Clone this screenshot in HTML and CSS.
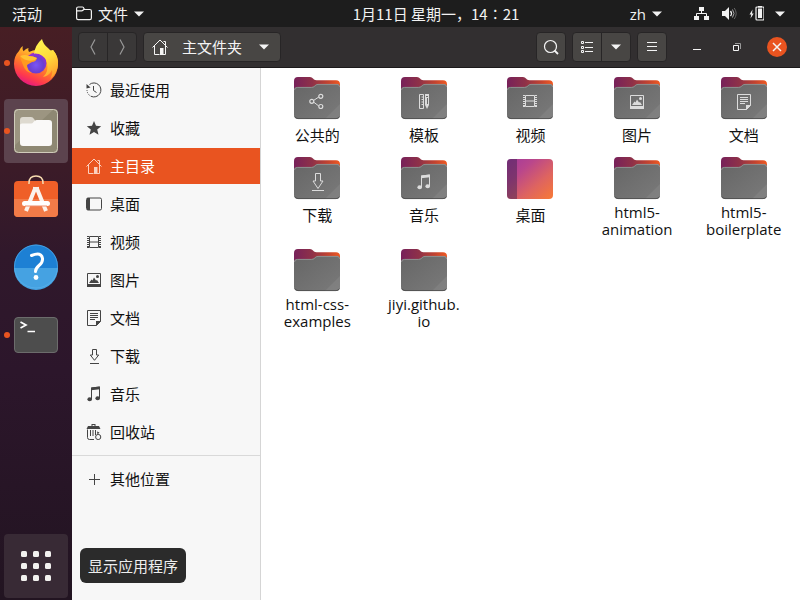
FILE: index.html
```html
<!DOCTYPE html>
<html lang="zh-CN">
<head>
<meta charset="utf-8">
<meta name="viewport" content="width=device-width, initial-scale=1">
<title>主文件夹</title>
<link rel="stylesheet" href="styles.css">
</head>
<body>
<svg class="defs" width="0" height="0" aria-hidden="true">
  <defs>
    <linearGradient id="folder-back" x1="0" y1="0" x2="1" y2="0"><stop offset="0" stop-color="#77215a"/><stop offset=".4" stop-color="#8f3148"/><stop offset=".75" stop-color="#c4442f"/><stop offset="1" stop-color="#f05a22"/></linearGradient>
    <linearGradient id="folder-front" x1="0" y1="0" x2="1" y2="1"><stop offset="0" stop-color="#666"/><stop offset="1" stop-color="#7a7a7a"/></linearGradient>
    <linearGradient id="desk" x1="0" y1="0" x2="1" y2="1"><stop offset="0" stop-color="#a33a9c"/><stop offset=".3" stop-color="#b9468c"/><stop offset=".65" stop-color="#de6460"/><stop offset="1" stop-color="#f87a35"/></linearGradient>
    <linearGradient id="ff-body" x1=".8" y1="0" x2=".3" y2="1"><stop offset="0" stop-color="#fff14a"/><stop offset=".3" stop-color="#ffb52c"/><stop offset=".55" stop-color="#ff7a2a"/><stop offset=".8" stop-color="#ff3b4b"/><stop offset="1" stop-color="#e01587"/></linearGradient>
    <linearGradient id="ff-flame" x1=".3" y1="0" x2=".7" y2="1"><stop offset="0" stop-color="#fff44f"/><stop offset=".5" stop-color="#ffdb3b"/><stop offset="1" stop-color="#ff9c2c"/></linearGradient>
    <radialGradient id="ff-globe" cx=".5" cy=".6" r=".6"><stop offset="0" stop-color="#7a55f5"/><stop offset=".6" stop-color="#6a3fd0"/><stop offset="1" stop-color="#a42cd0"/></radialGradient>
    <symbol id="folder" viewBox="0 0 46 43">
      <path fill="url(#folder-back)" d="M0 20V4q0-4 4-4h12q2 0 3 1.500l1 1q1 .8 2.500.8H42q4 0 4 4V20z"/>
      <path fill="url(#folder-front)" d="M0 13q0-3 3-3h14q2 0 3-1l1.500-1.300Q22.500 7 24 7h19q3 0 3 3v28q0 4-4 4H4q-4 0-4-4z"/>
      <path fill="none" stroke="#999" stroke-width=".8" d="M.5 13q0-2.600 3-2.600h14q2 0 3-1l1-1Q22.500 7.400 24 7.400h19q2.500 0 2.600 2.600"/>
      <path fill="#858585" d="M46 27v11q0 4-4 4H31z" opacity=".6"/>
      <path fill="none" stroke="#494949" stroke-width=".8" d="M.8 39.500Q2 41.600 4 41.600h38q2.500 0 3.400-2"/>
    </symbol>
    <symbol id="home" viewBox="0 0 16 16"><path fill="none" stroke="currentColor" d="M.5 8.500 8 1l7.500 7.500M2.500 7v8.500h5M13.500 7v8.500h-2.500M11.500 2.500h2v3.500"/><path fill="currentColor" d="M8 9h3.500v7H8z"/></symbol>
    <symbol id="recent" viewBox="0 0 16 16"><path fill="none" stroke="currentColor" d="M3.500 2.500A7 7 0 1 1 5 14.300M7.500 4v4.500l3 2"/><path fill="currentColor" d="M.5 2v4.500l4-1z"/><path fill="none" stroke="currentColor" stroke-dasharray="1 1" d="M1 8a7 7 0 0 0 4 6.300"/></symbol>
    <symbol id="star" viewBox="0 0 16 16"><path fill="currentColor" d="m8 1 2 4.800 5.200.4-4 3.400 1.300 5.200L8 12l-4.500 2.800 1.300-5.200-4-3.400L6 5.800z"/></symbol>
    <symbol id="desktop" viewBox="0 0 16 16"><rect x=".5" y="2" width="15" height="12" rx="1.500" fill="none" stroke="currentColor"/><path fill="currentColor" d="M1 2h3v12H1z"/></symbol>
    <symbol id="video" viewBox="0 0 16 16"><path fill="none" stroke="currentColor" d="M3.500 2.500h9v11h-9zM3.500 8h9M3 2.500H1M13 2.500h2M3 13.500H1M13 13.500h2"/><path fill="none" stroke="currentColor" stroke-width="2" stroke-dasharray="1 1" d="M2 2v12M14 2v12"/></symbol>
    <symbol id="picture" viewBox="0 0 16 16"><path fill="none" stroke="currentColor" d="M1.500 1.500h13v13h-13z"/><path fill="currentColor" d="M1 12h14v3H1zM3 11l2.500-3.500 1 1L8 5.500 10 8.500l1-.5 2 3z"/><circle cx="11.500" cy="4.500" r="1.500" fill="currentColor"/></symbol>
    <symbol id="document" viewBox="0 0 16 16"><path fill="none" stroke="currentColor" d="M1.500.5h13v11l-4 4h-9zM4 3.500h8M4 5.500h8M4 7.500h8M4 9.500h5"/><path fill="currentColor" d="M10 11h5l-5 5z"/></symbol>
    <symbol id="download" viewBox="0 0 16 16"><path fill="none" stroke="currentColor" d="M6.500 1.500h4V7h2.200l-4.200 5.300L4.300 7h2.200zM4 15.500h9"/></symbol>
    <symbol id="music" viewBox="0 0 16 16"><path fill="none" stroke="currentColor" d="M5.500 13V2l8-1v11"/><path fill="currentColor" d="M5 1.500 14 .5v2.800l-9 1z"/><ellipse cx="3.700" cy="13.200" rx="2.300" ry="2" fill="currentColor"/><ellipse cx="11.700" cy="12.200" rx="2.300" ry="2" fill="currentColor"/></symbol>
    <symbol id="trash" viewBox="0 0 16 16"><path fill="currentColor" d="M5.500 0h4v2H13l1.500 3H.5L2 2h3.500zM6.500 1v1h2V1z"/><path fill="none" stroke="currentColor" d="M1.500 5.500v8q0 2 2 2H8M4.500 6v6M7 6v6M9.500 6v5"/><circle cx="12.200" cy="13" r="2.600" fill="none" stroke="currentColor"/><path fill="currentColor" d="m11 7.500 2.500 1-2 2z"/></symbol>
    <symbol id="plus" viewBox="0 0 16 16"><path fill="none" stroke="currentColor" d="M8.500 3v11M3 8.500h11"/></symbol>
    <symbol id="share" viewBox="0 0 16 16"><path fill="none" stroke="currentColor" d="M4.500 7.500 9.800 4M4.500 9l5.300 4"/><g fill="none" stroke="currentColor" stroke-width="1.200"><circle cx="2.800" cy="8.300" r="2"/><circle cx="11.800" cy="3.300" r="2"/><circle cx="11.800" cy="13.500" r="2"/></g></symbol>
    <symbol id="template" viewBox="0 0 16 16"><path fill="none" stroke="currentColor" d="M3.500 1.500h4v14h-4zM5.500 4h2M5.500 6.500h2M5.500 9h2M5.500 11.500h2"/><path fill="currentColor" d="M9 1h4v11l-2 4-2-4z"/><path stroke="#6c6c6c" d="M10 3.500h2M11.500 5v6"/></symbol>
    <symbol id="caret" viewBox="0 0 10 6"><path fill="currentColor" d="M0 .5h10l-5 5z"/></symbol>
  </defs>
</svg>

<div class="desktop">
  <header class="topbar">
    <button class="bar-btn activities">活动</button>
    <button class="bar-btn app-menu">
      <svg class="i16" viewBox="0 0 16 16"><path fill="none" stroke="currentColor" stroke-width="1.200" d="M.6 12V2.600Q.6 1 2.200 1h4.300q1 0 1.300 1.300.3 1.200 1.500 1.200h4.500q1.600 0 1.600 1.600V12q0 1.600-1.600 1.600H2.200Q.6 13.600.6 12zM.6 4.800h5q1.500 0 2.200-1.500"/></svg>
      <span>文件</span>
      <svg class="caret"><use href="#caret"/></svg>
    </button>
    <button class="bar-btn clock">1月11日 星期一，14∶21</button>
    <div class="status">
      <button class="bar-btn lang"><span>zh</span><svg class="caret"><use href="#caret"/></svg></button>
      <button class="bar-btn system" aria-label="系统菜单">
        <svg class="i16" viewBox="0 0 16 16"><path fill="currentColor" d="M5 1h5v4H5zM0 10h5v4H0zM10 10h5v4h-5z"/><path fill="none" stroke="currentColor" d="M7.500 5v2.500M2.500 10V7.500h10V10"/></svg>
        <svg class="i16" viewBox="0 0 16 16"><path fill="currentColor" d="M1 5h3l4-4v13l-4-4H1z"/><path fill="none" stroke="currentColor" stroke-width="1.300" d="M9.500 5q2 2.500 0 5"/><path fill="none" stroke="#aaa" d="M11.500 3.500q3 4 0 8"/><path fill="none" stroke="#666" d="M13.200 2q4 5.500 0 11"/></svg>
        <svg class="i16" viewBox="0 0 16 16"><path fill="currentColor" d="M4.500 3.500 1.500 8.500h1.800L2.500 12.500l3.200-5H4zM10 2.500h4v9.500h-4zM10 0h4v1.500h-4z"/><rect x="8" y="1" width="8" height="13" rx="1" fill="none" stroke="currentColor" stroke-width="1.200"/></svg>
        <svg class="caret"><use href="#caret"/></svg>
      </button>
    </div>
  </header>

  <div class="workspace">
    <nav class="dock" aria-label="程序坞">
      <button class="dock-item running" aria-label="Firefox">
        <svg width="48" height="48" viewBox="0 0 48 48">
          <path fill="url(#ff-body)" d="M10.700 7q-.7 3 .8 5.200Q14 9.500 16.500 9q-.8 2 .5 4 8-4 14 0l10-2q5 6 5 14A22 22 0 0 1 2 25Q2 17 7 12q1-3 3.700-5z"/>
          <circle cx="24" cy="24" r="10.500" fill="url(#ff-globe)"/>
          <path fill="url(#ff-flame)" d="M30 0q1 5 6 9 3 2.500 4 5l1-3q6 7 5 15-1 9-8 14 3-5 2-9-3 6-9 7 6-5 4-14-1-6-8-9-5-1-5 0 1-9 8-15z"/>
          <path fill="#ff9a1f" d="M8 18q4-2 8-1 5 0 9 2-1 4-5 4l-5 3q0 5 5 8-7-1-9-8-2-5-3-8z"/>
          <path fill="#ffc233" d="M8 17q5-2 9 0 4 0 8 2-2 2.500-5 2.500-7 1-12-4.500z"/>
        </svg>
      </button>
      <button class="dock-item running active" aria-label="文件">
        <svg width="46" height="46" viewBox="0 0 46 46"><rect x="1" y="1" width="44" height="44" rx="4" fill="#8e8873"/><path fill="#a59f8b" opacity=".6" d="M1 5q0-4 4-4h36L1 38z"/><rect x="1.500" y="1.500" width="43" height="43" rx="4" fill="none" stroke="#d0ccbb"/><path fill="#dedad0" d="M7 17v-5q0-3 3-3h8q2 0 3 2l1.500 2H36v4z"/><path fill="#faf9f8" d="M7 17q0-1.500 2-1.500h9q1.500 0 2.500-1.500t3-2H36q3 0 3 3v20q0 3-3 3H10q-3 0-3-3z"/></svg>
      </button>
      <button class="dock-item" aria-label="Ubuntu Software">
        <svg width="46" height="46" viewBox="0 0 46 46"><rect x="1" y="5" width="44" height="36" rx="4" fill="#ef5f28"/><path fill="#f27b48" d="M1 23h44v14q0 4-4 4H5q-4 0-4-4z"/><path fill="none" stroke="#f8dcb0" stroke-width="1.500" d="M16 8V7q0-7 7-7t7 7v1"/><path fill="none" stroke="#fbf3ed" stroke-width="4" d="M22.500 11.500 13 35M23.500 11.500 33 35"/><path fill="#f7efe8" d="M20 11h6v3h-6z"/><rect x="9" y="25" width="28" height="5" rx="2.500" fill="#fff"/><path stroke="#ef8c68" d="M12 30h22"/></svg>
      </button>
      <button class="dock-item" aria-label="帮助">
        <svg width="46" height="46" viewBox="0 0 46 46"><circle cx="23" cy="22.500" r="22" fill="#1d80d4"/><path fill="#45a2e2" d="M1 24h44a22 22 0 0 1-44 0z"/><circle cx="23" cy="22.500" r="21.500" fill="none" stroke="#5db4ec" opacity=".6"/><path fill="none" stroke="#fff" stroke-width="3" stroke-linecap="round" d="M18.500 11.500q10-4 11 3 .4 4-3.500 7-3.500 3-3.500 6"/><circle cx="23" cy="33.500" r="2.400" fill="#fff"/></svg>
      </button>
      <button class="dock-item running" aria-label="终端">
        <svg width="46" height="46" viewBox="0 0 46 46"><rect x="1.500" y="5.500" width="43" height="35" rx="3.500" fill="#4d4d4d" stroke="#6c6c6c"/><path fill="none" stroke="#fff" stroke-width="1.700" d="m7.500 10 5.500 3-5.500 3M14.500 19.500h7.500"/></svg>
      </button>
      <button class="dock-item show-apps" aria-label="显示应用程序">
        <svg width="30" height="30" viewBox="0 0 30 30" fill="#f2f1ef"><g id="app-row"><rect width="6" height="6" rx="1.500"/><rect x="12" width="6" height="6" rx="1.500"/><rect x="24" width="6" height="6" rx="1.500"/></g><use href="#app-row" y="12"/><use href="#app-row" y="24"/></svg>
      </button>
      <div class="tooltip" role="tooltip">显示应用程序</div>
    </nav>

    <main class="window">
      <div class="headerbar">
        <div class="group nav">
          <button class="tool" aria-label="后退"><svg class="i16" viewBox="0 0 16 16"><path fill="none" stroke="currentColor" stroke-width="1.200" d="M10 .5 6 8l4 7.500"/></svg></button>
          <button class="tool" aria-label="前进"><svg class="i16" viewBox="0 0 16 16"><path fill="none" stroke="currentColor" stroke-width="1.200" d="m6 .5 4 7.500-4 7.500"/></svg></button>
        </div>
        <button class="tool path"><svg class="i16"><use href="#home"/></svg><span>主文件夹</span><svg class="caret"><use href="#caret"/></svg></button>
        <div class="spacer"></div>
        <button class="tool" aria-label="搜索"><svg class="i16" viewBox="0 0 16 16"><circle cx="7.500" cy="7.500" r="6" fill="none" stroke="currentColor" stroke-width="1.200"/><path stroke="currentColor" stroke-width="1.800" d="m11.500 11.500 3.500 3.500"/></svg></button>
        <div class="group">
          <button class="tool" aria-label="列表视图"><svg class="i16" viewBox="0 0 16 16"><path fill="none" stroke="currentColor" d="M2.500 2.500h2v2h-2zM2.500 7.500h2v2h-2zM2.500 11.500h2v2h-2zM6 3.500h8M6 8.500h8M6 12.500h8"/></svg></button>
          <button class="tool" aria-label="视图选项"><svg class="caret"><use href="#caret"/></svg></button>
        </div>
        <button class="tool" aria-label="菜单"><svg class="i16" viewBox="0 0 16 16"><path stroke="currentColor" d="M3 3.500h10M3 7.500h10M3 11.500h10"/></svg></button>
        <div class="controls">
          <button class="control" aria-label="最小化"><svg class="i16" viewBox="0 0 16 16"><path stroke="currentColor" d="M4 10.500h8"/></svg></button>
          <button class="control" aria-label="还原"><svg class="i16" viewBox="0 0 16 16"><path fill="none" stroke="currentColor" d="M4.500 6.500h5v5h-5z"/><path fill="none" stroke="#999" d="M6 4.500h5.500V10"/></svg></button>
          <button class="control close" aria-label="关闭"><svg class="i16" viewBox="0 0 16 16"><path stroke="currentColor" stroke-width="1.500" d="m4 4 8 8M12 4l-8 8"/></svg></button>
        </div>
      </div>

      <div class="body">
        <aside class="sidebar">
          <ul class="places">
            <li><a class="place" href="#"><svg class="i16"><use href="#recent"/></svg>最近使用</a></li>
            <li><a class="place" href="#"><svg class="i16"><use href="#star"/></svg>收藏</a></li>
            <li><a class="place selected" href="#"><svg class="i16"><use href="#home"/></svg>主目录</a></li>
            <li><a class="place" href="#"><svg class="i16"><use href="#desktop"/></svg>桌面</a></li>
            <li><a class="place" href="#"><svg class="i16"><use href="#video"/></svg>视频</a></li>
            <li><a class="place" href="#"><svg class="i16"><use href="#picture"/></svg>图片</a></li>
            <li><a class="place" href="#"><svg class="i16"><use href="#document"/></svg>文档</a></li>
            <li><a class="place" href="#"><svg class="i16"><use href="#download"/></svg>下载</a></li>
            <li><a class="place" href="#"><svg class="i16"><use href="#music"/></svg>音乐</a></li>
            <li><a class="place" href="#"><svg class="i16"><use href="#trash"/></svg>回收站</a></li>
          </ul>
          <ul class="places other">
            <li><a class="place" href="#"><svg class="i16"><use href="#plus"/></svg>其他位置</a></li>
          </ul>
        </aside>
        <section class="files" aria-label="主文件夹">
          <a class="file" href="#"><svg class="folder" viewBox="0 0 46 43"><use href="#folder" width="46" height="43"/><use class="emblem" href="#share" x="15" y="16" width="16" height="16"/></svg><span>公共的</span></a>
          <a class="file" href="#"><svg class="folder" viewBox="0 0 46 43"><use href="#folder" width="46" height="43"/><use class="emblem" href="#template" x="15" y="16" width="16" height="16"/></svg><span>模板</span></a>
          <a class="file" href="#"><svg class="folder" viewBox="0 0 46 43"><use href="#folder" width="46" height="43"/><use class="emblem" href="#video" x="15" y="16" width="16" height="16"/></svg><span>视频</span></a>
          <a class="file" href="#"><svg class="folder" viewBox="0 0 46 43"><use href="#folder" width="46" height="43"/><use class="emblem" href="#picture" x="15" y="17" width="16" height="16"/></svg><span>图片</span></a>
          <a class="file" href="#"><svg class="folder" viewBox="0 0 46 43"><use href="#folder" width="46" height="43"/><use class="emblem" href="#document" x="15" y="17" width="16" height="16"/></svg><span>文档</span></a>
          <a class="file" href="#"><svg class="folder" viewBox="0 0 46 43"><use href="#folder" width="46" height="43"/><path class="emblem" fill="none" stroke="currentColor" d="M21.500 16.500h5V24h2.500l-5 7.500L19 24h2.500zM18 33.500h12"/></svg><span>下载</span></a>
          <a class="file" href="#"><svg class="folder" viewBox="0 0 46 43"><use href="#folder" width="46" height="43"/><use class="emblem" href="#music" x="15" y="17" width="16" height="16"/></svg><span>音乐</span></a>
          <a class="file" href="#"><svg class="folder" viewBox="0 0 46 43"><rect y="2" width="46" height="40" rx="4" fill="url(#desk)"/><path fill="#35204a" opacity=".45" d="M10 2H4Q0 2 0 6v32q0 4 4 4h6z"/></svg><span>桌面</span></a>
          <a class="file" href="#"><svg class="folder"><use href="#folder"/></svg><span class="latin">html5-<wbr>animation</span></a>
          <a class="file" href="#"><svg class="folder"><use href="#folder"/></svg><span class="latin">html5-<wbr>boilerplate</span></a>
          <a class="file" href="#"><svg class="folder"><use href="#folder"/></svg><span class="latin">html-css-<wbr>examples</span></a>
          <a class="file" href="#"><svg class="folder"><use href="#folder"/></svg><span class="latin">jiyi.github.<wbr>io</span></a>
        </section>
      </div>
    </main>
  </div>
</div>
</body>
</html>
```
FILE: styles.css
```css
* { box-sizing: border-box; }

body {
  margin: 0;
  font: 15px/22px "Open Sans", "Noto Sans CJK SC", sans-serif;
  color: #111;
}

button {
  font: inherit;
  color: inherit;
  background: none;
  border: 0;
  padding: 0;
}

a { color: inherit; text-decoration: none; }
ul { list-style: none; margin: 0; padding: 0; }
svg { display: block; flex: none; }
.defs { position: absolute; }
.i16 { width: 16px; height: 16px; }
.caret { width: 10px; height: 6px; }

.desktop {
  display: flex;
  flex-direction: column;
  min-height: 100vh;
}

/* Top bar */
.topbar {
  display: grid;
  grid-template-columns: 72px 1fr auto 1fr;
  align-items: center;
  height: 27px;
  background: #1d1d1d;
  color: #f2f2f2;
}

.bar-btn {
  display: flex;
  align-items: center;
  height: 27px;
  gap: 6px;
}

.activities { padding-left: 12px; }
.app-menu { padding-left: 4px; }
.clock { font-family: "Noto Sans CJK SC", sans-serif; }

.status {
  display: flex;
  justify-content: flex-end;
  gap: 32px;
  padding-right: 15px;
}

.system { gap: 11px; }

/* Dock */
.workspace { display: flex; flex: 1; }

.dock {
  position: relative;
  display: flex;
  flex-direction: column;
  gap: 4px;
  width: 72px;
  padding: 4px 4px 2px;
  background: linear-gradient(#471e24, #3b1b28 25%, #30182b 40%, #2c162b 60%, #221421);
}

.dock-item {
  position: relative;
  display: flex;
  align-items: center;
  justify-content: center;
  height: 64px;
  border-radius: 4px;
}

.dock-item.active { background: #5c434e; }

.dock-item.running::before {
  content: "";
  position: absolute;
  left: 0;
  width: 6px;
  height: 6px;
  border-radius: 50%;
  background: #e95420;
}

.dock-item svg { overflow: visible; }

.show-apps { margin-top: auto; background: #382a35; }

.tooltip {
  position: absolute;
  z-index: 1;
  left: 80px;
  bottom: 17px;
  padding: 7px 8px 6px;
  border-radius: 6px;
  background: #2b2b2b;
  color: #eee;
  white-space: nowrap;
}

/* Files window */
.window {
  display: flex;
  flex: 1;
  flex-direction: column;
  min-width: 0;
}

.headerbar {
  display: flex;
  align-items: center;
  gap: 6px;
  height: 41px;
  padding: 0 13px 0 6px;
  background: #322f30;
  border-bottom: 1px solid #1c1a1b;
  color: #f4f4f4;
}

.group { display: flex; }

.tool {
  display: flex;
  align-items: center;
  justify-content: center;
  width: 30px;
  height: 30px;
  border: 1px solid #272526;
  border-radius: 4px;
  background: #484644;
}

.group .tool:first-child { border-radius: 4px 0 0 4px; }
.group .tool:last-child { margin-left: -1px; border-radius: 0 4px 4px 0; }
.nav .tool { background: #3a3838; color: #999; }

.path {
  width: auto;
  padding: 0 11px 0 8px;
}

.path span { margin: 0 17px 0 14px; }

.spacer { flex: 1; }

.controls {
  display: flex;
  gap: 20px;
  margin-left: 14px;
}

.control {
  display: flex;
  align-items: center;
  justify-content: center;
  width: 20px;
  height: 20px;
  border-radius: 50%;
}

.close { background: #e95420; }

.body { display: flex; flex: 1; }

.sidebar {
  width: 189px;
  padding-top: 4px;
  background: #f7f7f7;
  border-right: 1px solid #d5d5d5;
}

.places {
  display: flex;
  flex-direction: column;
  gap: 2px;
}

.place {
  display: flex;
  align-items: center;
  gap: 8px;
  height: 36px;
  padding-left: 14px;
}

.place svg { color: #444; }
.place.selected { background: #e95420; color: #fff; }
.place.selected svg { color: #fbd0bf; }

.other {
  margin-top: 5px;
  padding-top: 5px;
  border-top: 1px solid #d9d9d9;
}

.files {
  display: grid;
  flex: 1;
  grid-template-columns: repeat(5, 1fr);
  align-content: start;
  row-gap: 11px;
  padding: 9px 3px;
  background: #fff;
}

.file {
  display: flex;
  flex-direction: column;
  align-items: center;
  gap: 4px;
  text-align: center;
}

.folder { width: 46px; height: 43px; }
.emblem { color: #dcdcdc; }
.latin { max-width: 80px; line-height: 17px; }
```
